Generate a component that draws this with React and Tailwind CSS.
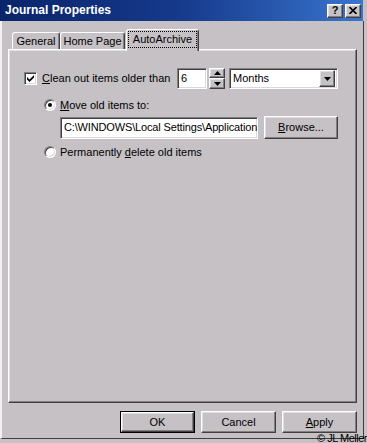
const bevel =
  "border border-t-white border-l-white border-r-[#404040] border-b-[#404040] shadow-[inset_-1px_-1px_0_#808080,inset_1px_1px_0_#dfdfdf] bg-[#c5c1c5]";
const sunken =
  "border border-t-[#808080] border-l-[#808080] border-r-white border-b-white shadow-[inset_1px_1px_0_#404040,inset_-1px_-1px_0_#dcd8dc] bg-white";

function Radio({ checked }) {
  return (
    <div
      className={`w-[12px] h-[12px] rounded-full ${sunken} flex items-center justify-center`}
    >
      {checked && <div className="w-[4px] h-[4px] rounded-full bg-black" />}
    </div>
  );
}

function Triangle({ up }) {
  return (
    <svg width="7" height="4" viewBox="0 0 7 4">
      <path d={up ? "M3.5 0 L7 4 L0 4 Z" : "M0 0 L7 0 L3.5 4 Z"} fill="#000" />
    </svg>
  );
}

export default function App() {
  return (
    <div className="relative w-[367px] h-[443px] bg-[#c5c1c5] overflow-hidden text-[11px] leading-[13px] text-black font-['Liberation_Sans',Arial,sans-serif]">
      {/* Title bar */}
      <div className="w-[363px] h-[21px] flex items-center pl-[5px] pr-[2px] bg-gradient-to-r from-[#0a246a] via-[#163a8c] to-[#3a75cf]">
        <span className="text-white font-bold text-[12px]">Journal Properties</span>
        <div className="ml-auto flex gap-[2px]">
          <div className={`w-[16px] h-[14px] ${bevel} flex items-center justify-center font-bold text-[11px] leading-none`}>
            ?
          </div>
          <div className={`w-[16px] h-[14px] ${bevel} flex items-center justify-center`}>
            <svg width="8" height="7" viewBox="0 0 8 7">
              <path d="M0.5 0 L7.5 7 M7.5 0 L0.5 7" stroke="#000" strokeWidth="1.6" />
            </svg>
          </div>
        </div>
      </div>

      {/* Window body */}
      <div className="w-[364px] h-[418px] border-l-2 border-l-[#f2f0f2] border-r border-r-[#404040] border-b border-b-[#404040] pl-[6px] pt-[8px]">
        {/* Tabs */}
        <div className="relative z-10 h-[20px] flex items-end pl-[4px]">
          <div className="w-[48px] h-[17px] border-t border-l border-t-white border-l-white border-r border-r-[#404040] shadow-[inset_-1px_0_0_#808080] rounded-t-[3px] flex items-center justify-center">
            General
          </div>
          <div className="w-[65px] h-[17px] border-t border-l border-t-white border-l-white border-r border-r-[#404040] shadow-[inset_-1px_0_0_#808080] rounded-t-[3px] flex items-center justify-center">
            Home Page
          </div>
          <div className="ml-[1px] -mb-[2px] w-[73px] h-[22px] bg-[#c5c1c5] border-t border-l border-t-white border-l-white border-r border-r-[#404040] shadow-[inset_-1px_0_0_#808080] rounded-t-[3px] px-[1px] pt-[1px] pb-[3px] flex">
            <span className="flex-1 border border-dotted border-black flex items-center justify-center">
              AutoArchive
            </span>
          </div>
        </div>

        {/* Panel */}
        <div className="w-[349px] h-[354px] border border-t-white border-l-white border-r-[#404040] border-b-[#404040] shadow-[inset_-1px_-1px_0_#808080,inset_1px_1px_0_#dfdfdf] pl-[15px] pt-[18px]">
          <div className="flex items-center h-[21px]">
            <div className={`w-[13px] h-[13px] ${sunken} flex items-center justify-center`}>
              <svg width="7" height="7" viewBox="0 0 7 7">
                <path d="M0 2 L0 4.5 L2.5 7 L7 2.5 L7 0 L2.5 4.5 Z" fill="#000" />
              </svg>
            </div>
            <span className="ml-[5px] w-[135px]">
              <u>C</u>lean out items older than
            </span>
            <div className={`w-[30px] h-[21px] ${sunken} pl-[3px] flex items-center`}>6</div>
            <div className="ml-[2px] w-[16px] h-[21px] flex flex-col">
              <div className={`h-[10px] ${bevel} flex items-center justify-center`}>
                <Triangle up />
              </div>
              <div className={`h-[11px] ${bevel} flex items-center justify-center`}>
                <Triangle />
              </div>
            </div>
            <div className={`ml-[4px] w-[109px] h-[21px] ${sunken} flex items-center pl-[3px] pr-[2px]`}>
              <span>Months</span>
              <div className={`ml-auto w-[16px] h-[17px] ${bevel} flex items-center justify-center`}>
                <Triangle />
              </div>
            </div>
          </div>

          <div className="mt-[9px] h-[14px] pl-[20px] flex items-center gap-[4px]">
            <Radio checked />
            <span>
              <u>M</u>ove old items to:
            </span>
          </div>

          <div className="mt-[4px] pl-[36px] flex items-center gap-[6px]">
            <div className={`w-[198px] h-[22px] ${sunken} pl-[3px] flex items-center overflow-hidden whitespace-nowrap tracking-[-0.15px]`}>
              {"C:\\WINDOWS\\Local Settings\\Application Data\\Microsoft\\Outlook\\archive.pst"}
            </div>
            <div className={`w-[74px] h-[23px] ${bevel} flex items-center justify-center`}>
              <span>
                <u>B</u>rowse...
              </span>
            </div>
          </div>

          <div className="mt-[6px] h-[14px] pl-[20px] flex items-center gap-[4px]">
            <Radio />
            <span>
              Permanently <u>d</u>elete old items
            </span>
          </div>
        </div>

        {/* Buttons */}
        <div className="mt-[8px] w-[349px] flex justify-end gap-[6px]">
          <div className="w-[75px] h-[22px] border border-black">
            <div className={`w-full h-full ${bevel} flex items-center justify-center`}>OK</div>
          </div>
          <div className={`w-[75px] h-[22px] ${bevel} flex items-center justify-center`}>Cancel</div>
          <div className={`w-[75px] h-[22px] ${bevel} flex items-center justify-center`}>
            <span>
              <u>A</u>pply
            </span>
          </div>
        </div>
      </div>

      <div className="absolute right-0 bottom-0 text-[11px] leading-[10px] tracking-[-0.5px] whitespace-nowrap">
        © JL Meller
      </div>
    </div>
  );
}
